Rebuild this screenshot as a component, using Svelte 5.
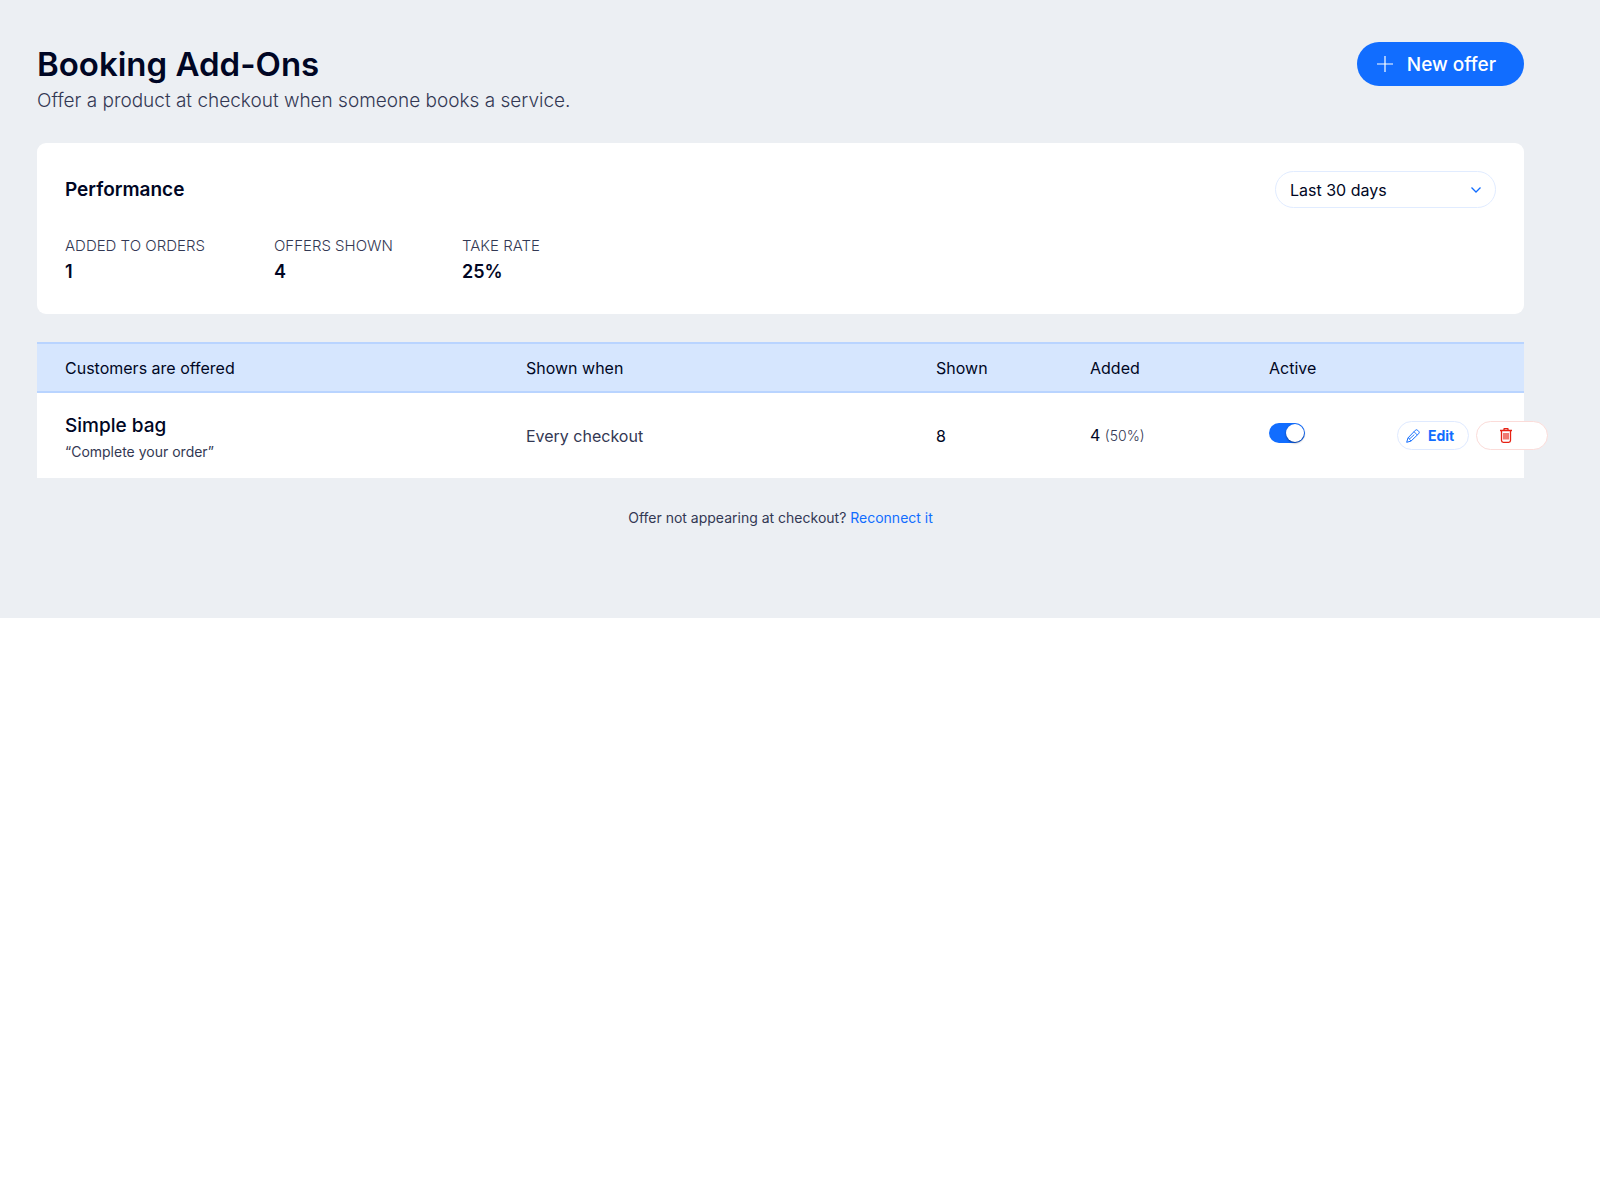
<script>
  let range = $state('30');
  const stats = [
    { label: 'ADDED TO ORDERS', value: '1' },
    { label: 'OFFERS SHOWN', value: '4' },
    { label: 'TAKE RATE', value: '25%' },
  ];
  let offers = $state([
    {
      name: 'Simple bag',
      note: 'Complete your order',
      when: 'Every checkout',
      shown: 8,
      added: 4,
      rate: '50%',
      active: true,
    },
  ]);
</script>

<main class="page">
  <header class="top">
    <div>
      <h1>Booking Add-Ons</h1>
      <p class="subtitle">Offer a product at checkout when someone books a service.</p>
    </div>
    <button class="new-offer" type="button">
      <svg width="16" height="16" viewBox="0 0 16 16" aria-hidden="true">
        <path d="M8 0V16M0 8H16" stroke="currentColor" stroke-width="1.2" />
      </svg>
      New offer
    </button>
  </header>

  <section class="card">
    <div class="card-head">
      <h2>Performance</h2>
      <div class="range">
        <select bind:value={range} aria-label="Date range">
          <option value="7">Last 7 days</option>
          <option value="30">Last 30 days</option>
          <option value="90">Last 90 days</option>
        </select>
        <svg width="12" height="8" viewBox="0 0 12 8" aria-hidden="true">
          <path d="M1.5 1.5L6 6L10.5 1.5" fill="none" stroke="currentColor" stroke-width="1.3" />
        </svg>
      </div>
    </div>
    <dl class="stats">
      {#each stats as stat}
        <div>
          <dt>{stat.label}</dt>
          <dd>{stat.value}</dd>
        </div>
      {/each}
    </dl>
  </section>

  <table>
    <colgroup>
      <col class="c-offer" /><col /><col class="c-shown" /><col class="c-added" />
      <col class="c-active" /><col class="c-actions" />
    </colgroup>
    <thead>
      <tr>
        <th scope="col">Customers are offered</th>
        <th scope="col">Shown when</th>
        <th scope="col">Shown</th>
        <th scope="col">Added</th>
        <th scope="col">Active</th>
        <td></td>
      </tr>
    </thead>
    <tbody>
      {#each offers as offer}
        <tr>
          <td class="offer">
            <div class="name">{offer.name}</div>
            <div class="note">“{offer.note}”</div>
          </td>
          <td class="muted">{offer.when}</td>
          <td>{offer.shown}</td>
          <td>{offer.added} <small>({offer.rate})</small></td>
          <td>
            <input class="toggle" type="checkbox" bind:checked={offer.active} aria-label="Active" />
          </td>
          <td>
            <div class="actions">
              <button class="pill edit" type="button">
                <svg width="14" height="14" viewBox="0 0 14 14" fill="none" stroke="currentColor" aria-hidden="true">
                  <path d="M.7 13.3L2 8.9L9.3 1.3Q10.5 .2 11.7 1.3L12.7 2.3Q13.8 3.5 12.7 4.7L5.1 12Z" />
                  <path d="M8 2.7L11.3 6M2 8.9L3.3 9.2L3.7 10.6L5.1 12M4 9.5L8.3 5.6" stroke-width=".9" />
                </svg>
                Edit
              </button>
              <button class="pill delete" type="button" aria-label="Delete">
                <svg width="12" height="15" viewBox="0 0 12 15" fill="none" stroke="currentColor" aria-hidden="true">
                  <path d="M0 2.5H12M4 2.5V1Q4 .6 4.5 .6H7.5Q8 .6 8 1V2.5" stroke-width="1.3" />
                  <path d="M1.5 2.5V12.5Q1.5 14.3 3.3 14.3H8.7Q10.5 14.3 10.5 12.5V2.5" stroke-width="1.3" />
                  <path d="M4 5V11.5M6 5V11.5M8 5V11.5" stroke-width="1.2" />
                </svg>
              </button>
            </div>
          </td>
        </tr>
      {/each}
    </tbody>
  </table>

  <p class="help">Offer not appearing at checkout? <a href="#reconnect">Reconnect it</a></p>
</main>

<style>
  :global(body) {
    background: #fff;
  }

  .page {
    box-sizing: border-box;
    padding: 42px 76px 88px 37px;
    background: #eceff3;
    color: #000624;
    font-family: Inter, "Liberation Sans", sans-serif;
    font-size: 16px;
    line-height: 24px;
  }

  h1, h2, p, dl, dd {
    margin: 0;
  }

  button, select {
    font-family: inherit;
    cursor: pointer;
  }

  .top {
    display: flex;
    justify-content: space-between;
    align-items: flex-start;
  }

  h1 {
    font-size: 33px;
    line-height: 45px;
    font-weight: 600;
  }

  .subtitle {
    padding-bottom: 28px;
    font-size: 19px;
    line-height: 28px;
    font-weight: 300;
    color: #333853;
  }

  .new-offer {
    display: flex;
    align-items: center;
    gap: 14px;
    height: 44px;
    padding: 0 28px 0 20px;
    border: 0;
    border-radius: 22px;
    background: #116dff;
    color: #fff;
    font-size: 19px;
    font-weight: 500;
  }

  .card {
    margin-bottom: 28px;
    padding: 28px;
    border-radius: 9px;
    background: #fff;
  }

  .card-head {
    display: flex;
    justify-content: space-between;
    align-items: center;
    margin-bottom: 26px;
  }

  h2 {
    font-size: 19px;
    font-weight: 600;
  }

  .range {
    position: relative;
    width: 221px;
  }

  select {
    display: block;
    box-sizing: border-box;
    width: 100%;
    height: 37px;
    padding: 0 36px 0 14px;
    appearance: none;
    border: 1px solid #e1ecff;
    border-radius: 19px;
    background: #fff;
    color: #000624;
    font-size: 16px;
  }

  .range svg {
    position: absolute;
    top: 15px;
    right: 14px;
    color: #116dff;
    pointer-events: none;
  }

  .stats {
    display: flex;
    gap: 69px;
  }

  dt {
    font-size: 15px;
    font-weight: 300;
    color: #333853;
  }

  dd {
    font-size: 18px;
    line-height: 28px;
    font-weight: 600;
  }

  table {
    width: 100%;
    table-layout: fixed;
    border-collapse: separate;
    border-spacing: 0;
  }

  .c-offer { width: 31%; }
  .c-shown { width: 154px; }
  .c-added { width: 179px; }
  .c-active { width: 128px; }
  .c-actions { width: 155px; }

  th, td {
    padding: 0 0 0 28px;
    text-align: left;
    font-weight: 400;
  }

  thead th, thead td {
    height: 47px;
    border-top: 2px solid #b9d4ff;
    border-bottom: 2px solid #b9d4ff;
    background: #d6e6fe;
  }

  tbody td {
    height: 85px;
    background: #fff;
  }

  .offer {
    box-sizing: border-box;
    padding-top: 4px;
  }

  .name {
    font-size: 19px;
    line-height: 28px;
    font-weight: 500;
  }

  .note {
    font-size: 14px;
    color: #333853;
  }

  .muted {
    color: #333853;
  }

  small {
    font-size: 14px;
    font-weight: 300;
    color: #333853;
  }

  .toggle {
    display: flex;
    align-items: center;
    width: 36px;
    height: 20px;
    margin: 0 0 5px;
    appearance: none;
    border-radius: 10px;
    background: #868aa5;
    cursor: pointer;
  }

  .toggle::before {
    content: "";
    width: 18px;
    height: 18px;
    margin-left: 1px;
    border-radius: 50%;
    background: #fff;
    box-shadow: 0 1px 2px rgb(0 6 36 / 50%);
  }

  .toggle:checked {
    background: #116dff;
  }

  .toggle:checked::before {
    margin-left: 17px;
  }

  .actions {
    display: flex;
    gap: 7px;
  }

  .pill {
    display: flex;
    flex: none;
    align-items: center;
    box-sizing: border-box;
    width: 72px;
    height: 29px;
    border: 1px solid #dfeaff;
    border-radius: 15px;
    background: #fff;
    font-size: 14px;
    font-weight: 700;
  }

  .edit {
    gap: 8px;
    padding: 0 0 0 8px;
    color: #116dff;
  }

  .delete {
    padding: 0 0 0 23px;
    border-color: #fbdcd9;
    color: #e62214;
  }

  .help {
    padding-top: 28px;
    text-align: center;
    font-size: 14px;
    color: #333853;
  }

  a {
    color: #116dff;
    text-decoration: none;
  }
</style>
